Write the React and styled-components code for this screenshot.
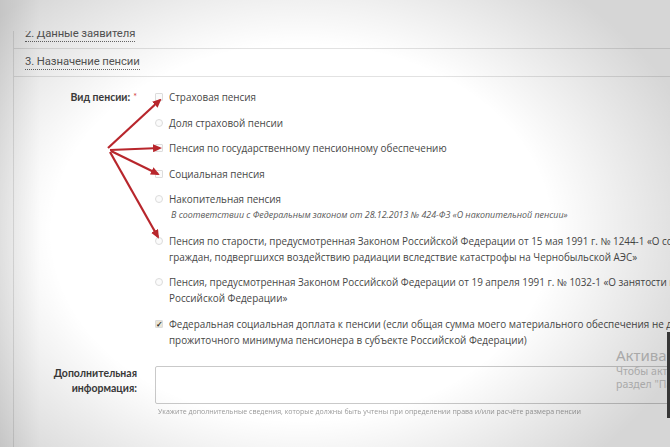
import React from "react";
import styled, { createGlobalStyle } from "styled-components";

const GlobalStyle = createGlobalStyle`
  html, body { margin: 0; padding: 0; background: #fff; }
  body { width: 670px; height: 447px; overflow: hidden; }
  #root { width: 670px; height: 447px; }
`;

const Page = styled.div`
  position: relative;
  width: 670px;
  height: 447px;
  overflow: hidden;
  background: #fff;
  padding-top: 31px;
  box-sizing: border-box;
  font-family: "Open Sans", "Noto Sans", sans-serif;
  color: #474747;
`;

const Panel = styled.div`
  margin-left: 13px;
  border-left: 1px solid #e4e4e4;
  min-height: 500px;
`;

const SectionRow = styled.div`
  display: flex;
  align-items: ${(p) => (p.$clipped ? "flex-end" : "center")};
  height: ${(p) => (p.$clipped ? "18px" : "28px")};
  box-sizing: border-box;
  padding-left: 11px;
  padding-bottom: ${(p) => (p.$clipped ? "6px" : "0")};
  overflow: hidden;
  border-bottom: 1px solid #e2e2e2;
`;

const SectionTitle = styled.span`
  font-family: Roboto, "Liberation Sans", sans-serif;
  font-size: 11.3px;
  line-height: 13px;
  color: #575757;
  border-bottom: 1px dotted #6a6a6a;
  padding-bottom: 1px;
  letter-spacing: -0.1px;
  white-space: nowrap;
`;

const Form = styled.div`
  padding-top: 12px;
  display: flex;
  flex-direction: column;
  gap: 18px;
`;

const FieldRow = styled.div`
  display: grid;
  grid-template-columns: 123px 1fr;
  column-gap: 18px;
  align-items: start;
`;

const Label = styled.div`
  text-align: right;
  font-family: Lato, "Open Sans", sans-serif;
  font-weight: 700;
  font-size: 10.5px;
  line-height: ${(p) => p.$lh || "16px"};
  color: #3a3a3a;
`;

const Req = styled.span`
  color: #d23a3a;
  font-weight: 400;
  font-size: 9px;
  vertical-align: top;
  margin-left: 3px;
`;

const Options = styled.div`
  display: flex;
  flex-direction: column;
  gap: 9.5px;
`;

const Option = styled.div`
  display: grid;
  grid-template-columns: 14px auto;
  align-items: start;
  font-size: 9.9px;
  line-height: 16px;
  white-space: nowrap;
`;

const Box = styled.span`
  width: 8px;
  height: 8px;
  margin-top: 4px;
  box-sizing: border-box;
  border: 1px solid #dcdcdc;
  border-radius: ${(p) => (p.$radio ? "50%" : "1px")};
  background: ${(p) => (p.$checked ? "#ebe6d6" : "#fbfbfb")};
  display: flex;
  align-items: center;
  justify-content: center;
  font-size: 8px;
  line-height: 1;
  color: #2d2d2d;
  font-weight: 700;
`;

const Note = styled.div`
  font-style: italic;
  font-size: 8.9px;
  color: #585858;
  padding-left: 2px;
`;

const Textarea = styled.div`
  height: 38px;
  width: 600px;
  box-sizing: border-box;
  border: 1px solid #c9c9c9;
  border-radius: 2px;
  background: #fff;
`;

const Hint = styled.div`
  font-size: 7px;
  color: #9a9a9a;
  white-space: nowrap;
  margin-top: 3px;
  padding-left: 3px;
  filter: blur(0.4px);
`;

const Overlay = styled.svg`
  position: absolute;
  left: 0;
  top: 0;
  pointer-events: none;
`;

const Vignette = styled.div`
  position: absolute;
  inset: 0;
  pointer-events: none;
  background:
    radial-gradient(ellipse 62% 70% at 45% 52%, rgba(0,0,0,0) 60%, rgba(0,0,0,0.16) 100%),
    linear-gradient(to right, rgba(0,0,0,0.08), rgba(0,0,0,0) 6%);
`;

const Watermark = styled.div`
  position: absolute;
  left: 616px;
  top: 345px;
  color: #a9a9a9;
  font-family: "Noto Sans", "Open Sans", sans-serif;
  white-space: nowrap;
  pointer-events: none;
`;

const WmTitle = styled.div`
  font-size: 15px;
  line-height: 20px;
`;

const WmText = styled.div`
  font-size: 10.5px;
  line-height: 13px;
`;

const DarkBar = styled.div`
  position: absolute;
  right: 0;
  top: 332px;
  width: 3px;
  height: 86px;
  background: #363636;
`;

const options = [
  { type: "check", lines: ["Страховая пенсия"] },
  { type: "radio", lines: ["Доля страховой пенсии"] },
  { type: "check", lines: ["Пенсия по государственному пенсионному обеспечению"] },
  { type: "check", lines: ["Социальная пенсия"] },
  {
    type: "radio",
    lines: ["Накопительная пенсия"],
    note: "В соответствии с Федеральным законом от 28.12.2013 № 424-ФЗ «О накопительной пенсии»",
  },
  {
    type: "radio",
    lines: [
      "Пенсия по старости, предусмотренная Законом Российской Федерации от 15 мая 1991 г. № 1244-1 «О социальной защите",
      "граждан, подвергшихся воздействию радиации вследствие катастрофы на Чернобыльской АЭС»",
    ],
  },
  {
    type: "radio",
    lines: [
      "Пенсия, предусмотренная Законом Российской Федерации от 19 апреля 1991 г. № 1032-1 «О занятости населения в",
      "Российской Федерации»",
    ],
  },
  {
    type: "check",
    checked: true,
    lines: [
      "Федеральная социальная доплата к пенсии (если общая сумма моего материального обеспечения не достигает величины",
      "прожиточного минимума пенсионера в субъекте Российской Федерации)",
    ],
  },
];

const arrows = [
  { x1: 108, y1: 148, x2: 160, y2: 100 },
  { x1: 110, y1: 150, x2: 160, y2: 148 },
  { x1: 111, y1: 151, x2: 158, y2: 174 },
  { x1: 110, y1: 152, x2: 158, y2: 237 },
];

export default function App() {
  return (
    <>
      <GlobalStyle />
      <Page>
        <Panel>
          <SectionRow $clipped>
            <SectionTitle>2. Данные заявителя</SectionTitle>
          </SectionRow>
          <SectionRow>
            <SectionTitle>3. Назначение пенсии</SectionTitle>
          </SectionRow>
          <Form>
            <FieldRow>
              <Label>
                Вид пенсии:<Req>*</Req>
              </Label>
              <Options>
                {options.map((o, i) => (
                  <Option key={i}>
                    <Box $radio={o.type === "radio"} $checked={o.checked}>
                      {o.checked ? "✓" : null}
                    </Box>
                    <div>
                      {o.lines.map((l, j) => (
                        <div key={j}>{l}</div>
                      ))}
                      {o.note ? <Note>{o.note}</Note> : null}
                    </div>
                  </Option>
                ))}
              </Options>
            </FieldRow>
            <FieldRow>
              <Label $lh="15px">
                Дополнительная
                <br />
                информация:
              </Label>
              <div>
                <Textarea />
                <Hint>
                  Укажите дополнительные сведения, которые должны быть учтены при определении права и/или расчёте размера пенсии
                </Hint>
              </div>
            </FieldRow>
          </Form>
        </Panel>
        <Overlay width="670" height="447" viewBox="0 0 670 447">
          <defs>
            <marker id="ah" markerWidth="9" markerHeight="8" refX="7" refY="4" orient="auto" markerUnits="userSpaceOnUse">
              <path d="M0,0 L9,4 L0,8 Z" fill="#b8262c" />
            </marker>
          </defs>
          {arrows.map((a, i) => (
            <line
              key={i}
              x1={a.x1}
              y1={a.y1}
              x2={a.x2}
              y2={a.y2}
              stroke="#b8262c"
              strokeWidth="2.2"
              markerEnd="url(#ah)"
            />
          ))}
        </Overlay>
        <Vignette />
        <Watermark>
          <WmTitle>Активация Windows</WmTitle>
          <WmText>Чтобы активировать Windows, перейдите в</WmText>
          <WmText>раздел "Параметры".</WmText>
        </Watermark>
        <DarkBar />
      </Page>
    </>
  );
}
